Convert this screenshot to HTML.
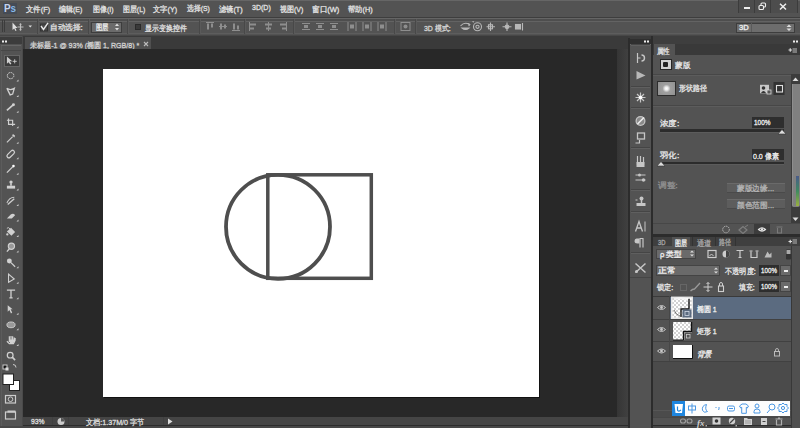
<!DOCTYPE html>
<html><head><meta charset="utf-8">
<style>
*{margin:0;padding:0;box-sizing:border-box}
html,body{width:800px;height:428px;overflow:hidden;background:#535353;font-family:"Liberation Sans",sans-serif}
.a{position:absolute}
.t{position:absolute;white-space:nowrap;line-height:20px;transform-origin:0 0;font-family:"Liberation Sans",sans-serif;-webkit-text-stroke:0.3px currentColor}
</style></head><body>
<div class="a" style="left:0;top:0;width:800px;height:17px;background:#535353"></div>
<div class="a" style="left:0;top:0;width:800px;height:1px;background:#666"></div>
<div class="a" style="left:0;top:16.5px;width:800px;height:1px;background:#3e3e3e"></div>
<div class="a" style="left:3px;top:2.5px;width:13.5px;height:11.5px;background:#454b55"></div>
<div class="t" style="left:4px;top:-2.2px;font-size:11px;font-weight:bold;color:#86b8ea;line-height:20px;transform:scaleX(0.9);-webkit-text-stroke:0"><span style="color:#c4d4ee">P</span>s</div>
<div class="t" style="left:26.00px;top:0.00px;font-size:8px;color:#e2e2e2;transform:scaleX(0.923);">文件(F)</div>
<div class="t" style="left:59.00px;top:0.00px;font-size:8px;color:#e2e2e2;transform:scaleX(0.870);">编辑(E)</div>
<div class="t" style="left:92.50px;top:0.00px;font-size:8px;color:#e2e2e2;transform:scaleX(0.875);">图像(I)</div>
<div class="t" style="left:122.50px;top:0.00px;font-size:8px;color:#e2e2e2;transform:scaleX(0.865);">图层(L)</div>
<div class="t" style="left:153.00px;top:0.00px;font-size:8px;color:#e2e2e2;transform:scaleX(0.907);">文字(Y)</div>
<div class="t" style="left:187.00px;top:-1.00px;font-size:8px;color:#e2e2e2;transform:scaleX(0.852);">选择(S)</div>
<div class="t" style="left:219.00px;top:0.00px;font-size:8px;color:#e2e2e2;transform:scaleX(0.904);">滤镜(T)</div>
<div class="t" style="left:251.50px;top:-2.00px;font-size:8px;color:#e2e2e2;transform:scaleX(0.881);">3D(D)</div>
<div class="t" style="left:279.50px;top:0.00px;font-size:8px;color:#e2e2e2;transform:scaleX(0.870);">视图(V)</div>
<div class="t" style="left:311.55px;top:0.00px;font-size:8px;color:#e2e2e2;transform:scaleX(0.946);">窗口(W)</div>
<div class="t" style="left:348.00px;top:0.00px;font-size:8px;color:#e2e2e2;transform:scaleX(0.907);">帮助(H)</div>
<div class="a" style="left:738px;top:0;width:59px;height:13px;background:#4d4d4d"></div>
<div class="a" style="left:738px;top:0;width:1px;height:13px;background:#3c3c3c"></div>
<div class="a" style="left:754px;top:0;width:1px;height:13px;background:#3c3c3c"></div>
<div class="a" style="left:770px;top:0;width:1px;height:13px;background:#3c3c3c"></div>
<div class="a" style="left:797px;top:0;width:1px;height:13px;background:#3c3c3c"></div>
<div class="a" style="left:744px;top:6.5px;width:6px;height:2px;background:#eeeeee"></div>
<svg class="a" style="left:757px;top:2px" width="11" height="9"><rect x="4" y="1" width="4.5" height="4" rx="1" fill="none" stroke="#eeeeee" stroke-width="1.1"/><rect x="2" y="3.5" width="4.5" height="4" rx="1" fill="#4d4d4d" stroke="#eeeeee" stroke-width="1.1"/></svg>
<svg class="a" style="left:778px;top:2px" width="11" height="9"><path d="M2 1.8 L8 7.5 M8 1.8 L2 7.5" stroke="#eeeeee" stroke-width="1.5"/></svg>
<div class="a" style="left:0;top:17.5px;width:800px;height:18.5px;background:#535353"></div>
<div class="a" style="left:0;top:18px;width:800px;height:1px;background:#656565"></div>
<div class="a" style="left:0;top:19px;width:800px;height:2px;background:#4e4e4e"></div>
<div class="a" style="left:0;top:21px;width:800px;height:1px;background:#636363"></div>
<div class="a" style="left:0;top:33px;width:800px;height:1px;background:#5d5d5d"></div>
<div class="a" style="left:0;top:34.5px;width:800px;height:1.5px;background:#474747"></div>
<div class="a" style="left:2px;top:20px;width:1px;height:12px;background:#3c3c3c"></div>
<div class="a" style="left:4px;top:20px;width:1px;height:12px;background:#3c3c3c"></div>
<svg class="a" style="left:0;top:17px" width="36" height="18">
<path d="M12.5 5.5 L12.5 13 L14.2 11.5 L15.5 14 L16.5 13.5 L15.3 11 L17.5 11 Z" fill="#dedede"/>
<path d="M17.5 10 h6 M20.5 7 v6" stroke="#bdbdbd" stroke-width="1.2"/><path d="M19.5 7.5 l1 -1.2 l1 1.2 M19.5 12.5 l1 1.2 l1 -1.2" stroke="#bdbdbd" stroke-width="0.8" fill="none"/>
<path d="M28.5 8.5 h3.5 l-1.75 2 z" fill="#e0e0e0"/></svg>
<div class="a" style="left:37px;top:19px;width:1px;height:15px;background:#484848"></div><div class="a" style="left:38px;top:19px;width:1px;height:15px;background:#5a5a5a"></div>
<div class="a" style="left:88px;top:19px;width:1px;height:15px;background:#484848"></div><div class="a" style="left:89px;top:19px;width:1px;height:15px;background:#5a5a5a"></div>
<div class="a" style="left:127px;top:19px;width:1px;height:15px;background:#484848"></div><div class="a" style="left:128px;top:19px;width:1px;height:15px;background:#5a5a5a"></div>
<div class="a" style="left:199px;top:19px;width:1px;height:15px;background:#484848"></div><div class="a" style="left:200px;top:19px;width:1px;height:15px;background:#5a5a5a"></div>
<div class="a" style="left:244px;top:19px;width:1px;height:15px;background:#484848"></div><div class="a" style="left:245px;top:19px;width:1px;height:15px;background:#5a5a5a"></div>
<div class="a" style="left:293px;top:19px;width:1px;height:15px;background:#484848"></div><div class="a" style="left:294px;top:19px;width:1px;height:15px;background:#5a5a5a"></div>
<div class="a" style="left:394px;top:19px;width:1px;height:15px;background:#484848"></div><div class="a" style="left:395px;top:19px;width:1px;height:15px;background:#5a5a5a"></div>
<div class="a" style="left:415px;top:19px;width:1px;height:15px;background:#484848"></div><div class="a" style="left:416px;top:19px;width:1px;height:15px;background:#5a5a5a"></div>
<svg class="a" style="left:39px;top:21px" width="11" height="11" viewBox="0 0 11 11"><rect x="1.5" y="3" width="7" height="7" fill="#474747" stroke="#333" stroke-width="1"/><path d="M2 5 L4.5 8.5 L9 1.8" fill="none" stroke="#e6e6e6" stroke-width="1.4"/></svg>
<div class="t" style="left:50.05px;top:17.50px;font-size:8px;color:#e0e0e0;transform:scaleX(0.955);">自动选择:</div>
<div class="a" style="left:91px;top:21.5px;width:31px;height:11px;background:#6b6b6b;border:1px solid #3d3d3d"></div>
<div class="t" style="left:95.50px;top:18.00px;font-size:8px;color:#f0f0f0;transform:scaleX(0.781);">图层</div>
<svg class="a" style="left:113px;top:22px" width="8" height="10"><path d="M2 4 l2 -2.5 l2 2.5z M2 6 l2 2.5 l2 -2.5z" fill="#ddd"/></svg>
<div class="a" style="left:135px;top:24px;width:6px;height:6px;background:#3a3a3a;border:1px solid #2a2a2a"></div>
<div class="t" style="left:144.50px;top:18.50px;font-size:8px;color:#e0e0e0;transform:scaleX(0.865);">显示变换控件</div>
<svg class="a" style="left:0;top:0" width="800" height="36"><path d="M206 22.5 h8" stroke="#8e8e8e"/><rect x="207" y="23.5" width="2" height="6" fill="#8e8e8e"/><rect x="211" y="23.5" width="2" height="4" fill="#8e8e8e"/><path d="M219 26.5 h8" stroke="#8e8e8e"/><rect x="220" y="23.5" width="2" height="6" fill="#8e8e8e"/><rect x="224" y="24.5" width="2" height="4" fill="#8e8e8e"/><path d="M232 30.5 h8" stroke="#8e8e8e"/><rect x="233" y="23.5" width="2" height="6" fill="#8e8e8e"/><rect x="237" y="25.5" width="2" height="4" fill="#8e8e8e"/><path d="M249.5 22 v9" stroke="#8e8e8e"/><rect x="250" y="23.5" width="6" height="2" fill="#8e8e8e"/><rect x="250" y="27.5" width="4" height="2" fill="#8e8e8e"/><path d="M268.5 22 v9" stroke="#8e8e8e"/><rect x="265" y="23.5" width="7" height="2" fill="#8e8e8e"/><rect x="266" y="27.5" width="5" height="2" fill="#8e8e8e"/><path d="M286.5 22 v9" stroke="#8e8e8e"/><rect x="280" y="23.5" width="6" height="2" fill="#8e8e8e"/><rect x="282" y="27.5" width="4" height="2" fill="#8e8e8e"/><path d="M302 23.5 h8 M302 29.5 h8" stroke="#8e8e8e"/><rect x="304" y="25" width="4" height="3" fill="#8e8e8e"/><path d="M316 23.5 h8 M316 29.5 h8" stroke="#8e8e8e"/><rect x="318" y="25" width="4" height="3" fill="#8e8e8e"/><path d="M330 23.5 h8 M330 29.5 h8" stroke="#8e8e8e"/><rect x="332" y="25" width="4" height="3" fill="#8e8e8e"/><path d="M348 22 v9 M356 22 v9" stroke="#8e8e8e"/><rect x="350" y="24.5" width="4" height="4" fill="#8e8e8e"/><path d="M363 22 v9 M371 22 v9" stroke="#8e8e8e"/><rect x="365" y="24.5" width="4" height="4" fill="#8e8e8e"/><path d="M378 22 v9 M386 22 v9" stroke="#8e8e8e"/><rect x="380" y="24.5" width="4" height="4" fill="#8e8e8e"/><rect x="401" y="22.5" width="9" height="8" fill="none" stroke="#8e8e8e"/><circle cx="405.5" cy="26.5" r="2" fill="#8e8e8e"/><g stroke="#b8b8b8" fill="none" stroke-width="1.1"><path d="M460.5 26 q4 -4.5 9 -1.5"/><path d="M462 28 q3.5 3 7 0 z" fill="#b8b8b8"/><path d="M468 23.5 l1.8 1 l-1.2 1.6" /><circle cx="477.5" cy="26.8" r="4"/><circle cx="477.5" cy="26.8" r="1.6"/><path d="M474 22 l-1.5 -0.5"/><path d="M490.5 22.5 v8.5 M486.5 26.8 h8.5"/><rect x="488.5" y="24.8" width="4" height="4"/><path d="M507 22.5 v8.5 M502.5 26.8 h9"/><circle cx="507" cy="26.8" r="1.8" fill="#b8b8b8"/><rect x="515.5" y="24.5" width="5" height="4.5" fill="#b8b8b8"/><path d="M522.5 23 v7.5"/></g></svg>
<div class="t" style="left:424.00px;top:18.50px;font-size:8px;color:#d6d6d6;transform:scaleX(0.867);">3D 模式:</div>
<div class="a" style="left:735.5px;top:22.5px;width:59px;height:10px;background:#6d6d6d;border:1px solid #3d3d3d"></div>
<div class="t" style="left:738.70px;top:17.70px;font-size:7px;color:#f0f0f0;transform:scaleX(1.078);">3D</div>
<div class="a" style="left:751px;top:23px;width:1px;height:9px;background:#5a5a5a"></div>
<svg class="a" style="left:785px;top:23px" width="8" height="10"><path d="M1.5 4 l2.5 -2.5 l2.5 2.5z M1.5 5.5 l2.5 2.5 l2.5 -2.5z" fill="#ddd"/></svg>
<div class="a" style="left:23px;top:36px;width:605px;height:13px;background:#3a3a3a"></div>
<div class="a" style="left:24.5px;top:37px;width:126.5px;height:12px;background:#505050"></div>
<div class="t" style="left:29.50px;top:35.50px;font-size:8px;color:#d2d2d2;transform:scaleX(0.883);">未标题-1 @ 93% (椭圆 1, RGB/8) *</div>
<svg class="a" style="left:142px;top:40px" width="8" height="8"><path d="M2 2 L6 6 M6 2 L2 6" stroke="#bbb" stroke-width="1.1"/></svg>
<div class="a" style="left:23px;top:49px;width:594px;height:367.5px;background:#282828"></div>
<div class="a" style="left:616.5px;top:49px;width:11.5px;height:367.5px;background:linear-gradient(90deg,#353535,#404040)"></div>
<div class="a" style="left:103px;top:69px;width:436px;height:327.5px;background:#fff;box-shadow:1px 1px 0 #121212"></div>
<svg class="a" style="left:0;top:0" width="800" height="428">
<circle cx="278" cy="226.8" r="52" fill="none" stroke="#4e4e4e" stroke-width="3.8"/>
<rect x="267.8" y="174.8" width="103.5" height="103.5" fill="none" stroke="#4e4e4e" stroke-width="3.5"/>
</svg>
<div class="a" style="left:23px;top:416.5px;width:605px;height:8.5px;background:#454545"></div>
<div class="a" style="left:0;top:425px;width:800px;height:1px;background:#2c2c2c"></div>
<div class="a" style="left:0;top:426px;width:800px;height:2px;background:#474747"></div>
<div class="a" style="left:52px;top:417px;width:1px;height:8px;background:#404040"></div>
<svg class="a" style="left:56px;top:417px" width="10" height="9"><circle cx="5" cy="4.5" r="3.5" fill="#ccc"/><path d="M5 4.5 L5 1 A3.5 3.5 0 0 1 8.5 4.5Z" fill="#555"/></svg>
<div class="a" style="left:68px;top:417px;width:1px;height:8px;background:#404040"></div>
<div class="t" style="left:30.50px;top:412.00px;font-size:7px;color:#dedede;transform:scaleX(0.964);">93%</div>
<div class="t" style="left:86.00px;top:413.00px;font-size:8px;color:#dedede;transform:scaleX(0.892);">文档:1.37M/0 字节</div>
<div class="a" style="left:163px;top:417px;width:1px;height:8px;background:#404040"></div>
<svg class="a" style="left:166px;top:417px" width="8" height="9"><path d="M2 1.5 L6.5 4.5 L2 7.5Z" fill="#ddd"/></svg>
<div class="a" style="left:0;top:36px;width:23px;height:390px;background:#535353"></div>
<div class="a" style="left:22px;top:36px;width:1px;height:390px;background:#4a4a4a"></div>
<div class="a" style="left:1px;top:46px;width:1px;height:380px;background:#5c5c5c"></div>
<div class="a" style="left:0;top:37px;width:22px;height:7px;background:#3c3c3c"></div>
<svg class="a" style="left:1px;top:39.5px" width="8" height="4"><rect x="1" y="0.5" width="2" height="2" fill="#eee"/><rect x="4" y="0.5" width="2" height="2" fill="#eee"/></svg>
<div class="a" style="left:1px;top:45px;width:20px;height:1px;background:#666"></div>
<div class="a" style="left:1px;top:50px;width:20px;height:1px;background:#474747"></div>
<div class="a" style="left:3.5px;top:54.5px;width:16px;height:12.5px;background:#3b3b3b;border:1px solid #666"></div>
<svg class="a" style="left:0;top:36px" width="23" height="392"><g transform="translate(11,24.50) scale(0.82)"><path d="M-5 -5 L-5 4 L-3 2 L-1 5 L0.5 4 L-1.5 1 L1.5 1 Z" fill="#d0d0d0"/><path d="M2 1 h5 M4.5 -1.5 v5" stroke="#d0d0d0" stroke-width="1.1"/></g><g transform="translate(11,40.05) scale(0.82)"><ellipse cx="-0.5" cy="-0.5" rx="4" ry="3.8" fill="none" stroke="#d0d0d0" stroke-width="1.2" stroke-dasharray="2 1"/></g><path d="M16.5 45.55 l2 0 l0 -2 z" fill="#cfcfcf"/><g transform="translate(11,55.60) scale(0.82)"><path d="M-5 -4 Q-1 -1 4 -4 L2 3 L-1 4 L-3 0 Z" fill="none" stroke="#d0d0d0" stroke-width="1.6"/></g><path d="M16.5 61.10 l2 0 l0 -2 z" fill="#cfcfcf"/><g transform="translate(11,71.15) scale(0.82)"><path d="M-5 4 L3 -3" stroke="#d0d0d0" stroke-width="2"/><circle cx="3" cy="-3" r="1.8" fill="#d0d0d0"/></g><path d="M16.5 76.65 l2 0 l0 -2 z" fill="#cfcfcf"/><g transform="translate(11,86.70) scale(0.82)"><path d="M-3 -5 V2 H5 M-5 -3 H2 V4" fill="none" stroke="#d0d0d0" stroke-width="1.4"/></g><path d="M16.5 92.20 l2 0 l0 -2 z" fill="#cfcfcf"/><g transform="translate(11,102.25) scale(0.82)"><path d="M-5 5 L2 -2" stroke="#d0d0d0" stroke-width="1.4"/><path d="M1 -4 L4 -1 L5 -3 L3 -5 Z" fill="#d0d0d0"/></g><path d="M16.5 107.75 l2 0 l0 -2 z" fill="#cfcfcf"/><g transform="translate(11,117.80) scale(0.82)"><rect x="-6" y="-2.3" width="11" height="4.6" rx="2.3" transform="rotate(-45)" fill="none" stroke="#d0d0d0" stroke-width="1.5"/></g><path d="M16.5 123.30 l2 0 l0 -2 z" fill="#cfcfcf"/><g transform="translate(11,133.35) scale(0.82)"><path d="M-5 4 L2 -3" stroke="#d0d0d0" stroke-width="1.6"/><circle cx="3" cy="-4" r="1.6" fill="#fff"/></g><path d="M16.5 138.85 l2 0 l0 -2 z" fill="#cfcfcf"/><g transform="translate(11,148.90) scale(0.82)"><circle cx="0" cy="-3.5" r="2" fill="#d0d0d0"/><rect x="-1" y="-2" width="2" height="3" fill="#d0d0d0"/><rect x="-5" y="1" width="10" height="3.5" fill="#d0d0d0"/></g><path d="M16.5 154.40 l2 0 l0 -2 z" fill="#cfcfcf"/><g transform="translate(11,164.45) scale(0.82)"><path d="M-5 3 Q-2 -4 4 -4" fill="none" stroke="#d0d0d0" stroke-width="1.3"/><path d="M-4 5 L4 -2" stroke="#d0d0d0" stroke-width="1.6"/></g><path d="M16.5 169.95 l2 0 l0 -2 z" fill="#cfcfcf"/><g transform="translate(11,180.00) scale(0.82)"><path d="M-5 3 L0 -2 Q3 -4 5 -1 L1 3 Z" fill="#d0d0d0"/></g><path d="M16.5 185.50 l2 0 l0 -2 z" fill="#cfcfcf"/><g transform="translate(11,195.55) scale(0.82)"><path d="M-5 0 L0 -4.5 L5 0.5 L0.5 5 Z" fill="#d0d0d0"/><path d="M-1 -3 Q-3 -6 -5 -4" stroke="#d0d0d0" stroke-width="1.1" fill="none"/><circle cx="-4.5" cy="3.5" r="1.4" fill="#d0d0d0"/></g><path d="M16.5 201.05 l2 0 l0 -2 z" fill="#cfcfcf"/><g transform="translate(11,211.10) scale(0.82)"><circle cx="0.5" cy="-1" r="3.8" fill="#9a9a9a" stroke="#d0d0d0" stroke-width="1.4"/><path d="M-2 2 L-5 5.5" stroke="#d0d0d0" stroke-width="1.6"/></g><path d="M16.5 216.60 l2 0 l0 -2 z" fill="#cfcfcf"/><g transform="translate(11,226.65) scale(0.82)"><circle cx="-2" cy="-2" r="3" fill="#d0d0d0"/><path d="M0 0 L5 5" stroke="#d0d0d0" stroke-width="1.5"/></g><path d="M16.5 232.15 l2 0 l0 -2 z" fill="#cfcfcf"/><g transform="translate(11,242.20) scale(0.82)"><path d="M-3 -5 L-3 5 L4 1 Z" fill="none" stroke="#d0d0d0" stroke-width="1.3"/></g><path d="M16.5 247.70 l2 0 l0 -2 z" fill="#cfcfcf"/><g transform="translate(11,257.75) scale(0.82)"><path d="M-5 -4.5 H5 M0 -4.5 V5 M-2 5 H2" stroke="#d0d0d0" stroke-width="1.6"/></g><path d="M16.5 263.25 l2 0 l0 -2 z" fill="#cfcfcf"/><g transform="translate(11,273.30) scale(0.82)"><path d="M-4 -5 L-4 3 L-2 1 L0 5 L1.5 4 L-0.5 0 L2 0 Z" fill="#d0d0d0"/></g><path d="M16.5 278.80 l2 0 l0 -2 z" fill="#cfcfcf"/><g transform="translate(11,288.85) scale(0.82)"><ellipse cx="0" cy="0" rx="5" ry="3.5" fill="#999" stroke="#d0d0d0" stroke-width="1.1"/></g><path d="M16.5 294.35 l2 0 l0 -2 z" fill="#cfcfcf"/><g transform="translate(11,304.40) scale(0.82)"><path d="M-5 1 L-2 4 L3 4 L5 0 L5 -3 M-2 2 V-5 M0 1 V-5.5 M2 1 V-5 M4 1 V-3.5" fill="none" stroke="#d0d0d0" stroke-width="1.5"/><path d="M-2 -1 h6 v3 l-2 2 h-3z" fill="#d0d0d0"/></g><path d="M16.5 309.90 l2 0 l0 -2 z" fill="#cfcfcf"/><g transform="translate(11,319.95) scale(0.82)"><circle cx="-1" cy="-1" r="3.5" fill="none" stroke="#d0d0d0" stroke-width="1.5"/><path d="M1.5 1.5 L5 5" stroke="#d0d0d0" stroke-width="2"/></g><rect x="3" y="329" width="4" height="4" fill="#111" stroke="#ccc" stroke-width="1"/><rect x="5.5" y="331.5" width="3" height="3" fill="#ddd"/><path d="M13 328.5 q3 0 3 3" stroke="#ccc" stroke-width="1" fill="none"/><rect x="9.5" y="344.5" width="10" height="10" fill="#fff" stroke="#222" stroke-width="1"/><rect x="3" y="338" width="10.5" height="10.5" fill="#fff" stroke="#222" stroke-width="1"/><rect x="5.5" y="359.5" width="10" height="7.5" fill="none" stroke="#ccc" stroke-width="1.2"/><circle cx="10.5" cy="363.2" r="2.3" fill="none" stroke="#ccc" stroke-width="1"/><rect x="5.5" y="376" width="10" height="7" fill="none" stroke="#ccc" stroke-width="1.2"/><rect x="7.5" y="374.5" width="8" height="2" fill="#ccc"/></svg>
<div class="a" style="left:627.5px;top:37.5px;width:2px;height:390.5px;background:#2c2c2c"></div>
<div class="a" style="left:628px;top:36px;width:2px;height:1.5px;background:#3b3b3b"></div>
<div class="a" style="left:630px;top:36px;width:21px;height:392px;background:#535353"></div>
<div class="a" style="left:630px;top:36px;width:21px;height:3px;background:#3b3b3b"></div>
<div class="a" style="left:630px;top:39px;width:21px;height:4.5px;background:#2f2f2f"></div>
<div class="a" style="left:630px;top:43.5px;width:21px;height:1px;background:#666"></div>
<svg class="a" style="left:643px;top:39.5px" width="8" height="4"><rect x="1" y="0.5" width="2" height="2" fill="#eee"/><rect x="4" y="0.5" width="2" height="2" fill="#eee"/></svg>
<div class="a" style="left:651px;top:36px;width:2px;height:392px;background:#2c2c2c"></div>
<svg class="a" style="left:630px;top:44px" width="21" height="240">
<g stroke="#454545" stroke-width="1"><path d="M1 0.5 H20"/><path d="M1 42.5 H20"/><path d="M1 63.5 H20"/><path d="M1 103.5 H20"/><path d="M1 145.5 H20"/><path d="M1 167.5 H20"/><path d="M1 208.5 H20"/><path d="M0 233.5 H21"/></g>
<g stroke="#5f5f5f" stroke-width="1"><path d="M1 1.5 H20"/><path d="M1 43.5 H20"/><path d="M1 64.5 H20"/><path d="M1 104.5 H20"/><path d="M1 146.5 H20"/><path d="M1 168.5 H20"/><path d="M1 209.5 H20"/></g>
<g transform="translate(10.5,14)"><path d="M-3 -5 V5 M-3 0 H0" stroke="#c6c6c6" stroke-width="1.2"/><path d="M1 -3 A3 3 0 1 1 1 3" fill="none" stroke="#c6c6c6" stroke-width="1.4"/></g>
<g transform="translate(10.5,31)"><path d="M-4 -4 L5 0.5 L-4 4.5 Z" fill="#b8b8b8"/></g>
<g transform="translate(10.5,53.5)"><path d="M-5 0 H5 M0 -5 V5 M-3.5 -3.5 L3.5 3.5 M3.5 -3.5 L-3.5 3.5" stroke="#c6c6c6" stroke-width="1.2"/><circle r="1.8" fill="#fff"/></g>
<g transform="translate(10.5,77)"><circle r="5" fill="#c6c6c6"/><circle r="3.8" fill="#8a8a8a"/><path d="M-3 3 L3.5 -3.5" stroke="#eee" stroke-width="1.6"/></g>
<g transform="translate(10.5,94)"><rect x="-3" y="-5" width="7" height="6" fill="none" stroke="#c6c6c6" stroke-width="1.3"/><path d="M-5 5 h4 v-3" fill="none" stroke="#c6c6c6" stroke-width="1.2"/></g>
<g transform="translate(10.5,117)"><path d="M-3 4 V-5 M0 3 V-5 M3 4 V-4" stroke="#c6c6c6" stroke-width="1.2"/><rect x="-4" y="1" width="8" height="5" fill="#c6c6c6"/></g>
<g transform="translate(10.5,133.5)"><path d="M-5 -2.5 H5 M-5 2.5 H5" stroke="#c6c6c6" stroke-width="1.2"/><circle cx="-1" cy="-2.5" r="1.5" fill="#c6c6c6"/><circle cx="3" cy="2.5" r="1.7" fill="#c6c6c6"/></g>
<g transform="translate(10.5,158)"><circle cx="1" cy="-3.5" r="2" fill="#c6c6c6"/><path d="M1 -2 V1" stroke="#c6c6c6" stroke-width="1.5"/><rect x="-4" y="1" width="9" height="3" fill="#c6c6c6"/><path d="M-5 -2 h2" stroke="#c6c6c6"/></g>
<g transform="translate(10.5,182.5)"><path d="M-5 5 L-1.5 -5 L2 5 M-3.5 1.5 H0.5" fill="none" stroke="#c6c6c6" stroke-width="1.3"/><path d="M4.5 -5 V5" stroke="#c6c6c6" stroke-width="1"/></g>
<g transform="translate(10.5,198.5)"><path d="M-1 -4 H-4 Q-6 -4 -6 -1.5 Q-6 1 -3 1 H-1 Z" fill="#c6c6c6"/><path d="M-0.5 -4 V5 M2.5 -4 V5 M-1 -4 H3" stroke="#c6c6c6" stroke-width="1.2"/></g>
<g transform="translate(10.5,223.5)"><path d="M-5 -4 L5 5 M5 -4 L-5 5" stroke="#c6c6c6" stroke-width="1.5"/><circle cx="-4" cy="4" r="1.5" fill="#c6c6c6"/></g>
</svg>
<div class="a" style="left:653px;top:36px;width:147px;height:8px;background:#3e3e3e"></div>
<svg class="a" style="left:792px;top:39.5px" width="8" height="4"><rect x="1" y="0.5" width="2" height="2" fill="#eee"/><rect x="4" y="0.5" width="2" height="2" fill="#eee"/></svg>
<div class="a" style="left:653px;top:44px;width:147px;height:11px;background:#393939"></div>
<div class="a" style="left:654px;top:44px;width:20.5px;height:11px;background:#535353"></div>
<div class="t" style="left:657.20px;top:42.00px;font-size:8px;color:#e0e0e0;transform:scaleX(0.812);">属性</div>
<svg class="a" style="left:786px;top:45px" width="14" height="10"><path d="M2.5 5 h3.5 M4.25 3.2 v3.6" stroke="#e0e0e0" stroke-width="1.1"/><rect x="6.5" y="3" width="4.5" height="5" fill="#7a7a7a"/></svg>
<div class="a" style="left:659.5px;top:58.5px;width:12px;height:11px;background:#262626"></div>
<div class="a" style="left:660.5px;top:59.5px;width:10px;height:9px;background:#d0d0d0"></div>
<div class="a" style="left:663px;top:61.5px;width:5px;height:5px;background:#222;border-radius:1px"></div>
<div class="t" style="left:675.30px;top:55.60px;font-size:8px;color:#e6e6e6;transform:scaleX(0.944);">蒙版</div>
<div class="a" style="left:653px;top:74px;width:138px;height:1px;background:#474747"></div>
<div class="a" style="left:653px;top:75px;width:138px;height:1px;background:#5c5c5c"></div>
<div class="a" style="left:657px;top:80.5px;width:19px;height:15px;background:#2d2d2d"></div>
<div class="a" style="left:658px;top:81.5px;width:17px;height:13px;background:radial-gradient(circle at 50% 50%, #fff 0, #f0f0f0 1.5px, #a0a0a0 4px, #909090 100%)"></div>
<div class="t" style="left:679.00px;top:79.00px;font-size:8px;color:#e6e6e6;transform:scaleX(0.875);">形状路径</div>
<svg class="a" style="left:758px;top:81px" width="30" height="15">
<rect x="2" y="3.8" width="9" height="8.5" fill="#c8c8c8"/><circle cx="5.5" cy="7" r="1.8" fill="#333"/><path d="M3 12 q2.5 -4 5 0z" fill="#333"/>
<rect x="9" y="9" width="4" height="4" fill="#555" stroke="#ddd" stroke-width="0.8"/>
<rect x="15.5" y="1" width="11" height="13" fill="#333"/><rect x="18.5" y="4.5" width="6" height="6.5" fill="none" stroke="#e0e0e0" stroke-width="1.1"/>
</svg>
<div class="a" style="left:653px;top:105px;width:138px;height:1px;background:#474747"></div>
<div class="a" style="left:653px;top:106px;width:138px;height:1px;background:#5c5c5c"></div>
<div class="t" style="left:660.00px;top:113.50px;font-size:8px;color:#e6e6e6;transform:scaleX(1.056);">浓度:</div>
<div class="a" style="left:751.5px;top:117px;width:32px;height:10.5px;background:#2e2e2e"></div>
<div class="t" style="left:753.50px;top:113.00px;font-size:7px;color:#f0f0f0;transform:scaleX(0.917);">100%</div>
<div class="a" style="left:660px;top:129px;width:124px;height:2.5px;background:#2c2c2c"></div>
<div class="a" style="left:660px;top:131.5px;width:124px;height:1px;background:#5c5c5c"></div>
<svg class="a" style="left:777px;top:128px" width="10" height="7"><path d="M1 6 L5 1.5 L9 6 Z" fill="#ddd" stroke="#333" stroke-width="0.6"/></svg>
<div class="t" style="left:660.00px;top:145.50px;font-size:8px;color:#e6e6e6;transform:scaleX(1.056);">羽化:</div>
<div class="a" style="left:751.5px;top:149px;width:32px;height:11px;background:#2e2e2e"></div>
<div class="t" style="left:752.50px;top:146.50px;font-size:8px;color:#f0f0f0;transform:scaleX(0.879);">0.0 像素</div>
<div class="a" style="left:660px;top:161.5px;width:124px;height:2.5px;background:#2c2c2c"></div>
<div class="a" style="left:660px;top:164px;width:124px;height:1px;background:#5c5c5c"></div>
<svg class="a" style="left:656px;top:160px" width="10" height="7"><path d="M1 6 L5 1.5 L9 6 Z" fill="#ddd" stroke="#333" stroke-width="0.6"/></svg>
<div class="t" style="left:657.50px;top:176.00px;font-size:8px;color:#8f8f8f;transform:scaleX(1.083);">调整:</div>
<div class="a" style="left:727px;top:182.5px;width:58px;height:10.5px;background:#5d5d5d;border-top:1px solid #6a6a6a;border-bottom:1px solid #4a4a4a"></div>
<div class="t" style="left:736.50px;top:179.00px;font-size:8px;color:#b4b4b4;transform:scaleX(0.961);">蒙版边缘...</div>
<div class="a" style="left:727px;top:199px;width:58px;height:10px;background:#5d5d5d;border-top:1px solid #6a6a6a;border-bottom:1px solid #4a4a4a"></div>
<div class="t" style="left:736.50px;top:195.50px;font-size:8px;color:#b4b4b4;transform:scaleX(0.961);">颜色范围...</div>
<div class="a" style="left:790.5px;top:74px;width:9.5px;height:150px;background:#3c3c3c"></div>
<div class="a" style="left:792px;top:84px;width:8px;height:123px;background:#808080;border-left:1px solid #8e8e8e;border-radius:0 0 2px 2px"></div>
<div class="a" style="left:796px;top:176px;width:3px;height:30px;background:linear-gradient(#4a5a8a,#3f8a60,#9ab040)"></div>
<svg class="a" style="left:791px;top:75px" width="9" height="8"><path d="M1.5 6 L4.5 2.5 L7.5 6 Z" fill="#ddd"/></svg>
<svg class="a" style="left:791px;top:215px" width="9" height="8"><path d="M1.5 2.5 L4.5 6 L7.5 2.5 Z" fill="#ddd"/></svg>
<div class="a" style="left:653px;top:223px;width:147px;height:1px;background:#474747"></div>
<svg class="a" style="left:718px;top:224px" width="72" height="11">
<circle cx="8" cy="5.5" r="3.3" fill="none" stroke="#c8c8c8" stroke-width="1" stroke-dasharray="1.2 1"/>
<path d="M21 6 l4 -3.5 l4 3.5 l-4 3.5z" fill="none" stroke="#7e7e7e" stroke-width="1.2"/><path d="M27 3 l3 -2" stroke="#7e7e7e"/>
<rect x="36" y="-0.5" width="16" height="11" fill="#3c3c3c"/>
<path d="M40.5 5.5 Q44 2.2 47.5 5.5 Q44 8.8 40.5 5.5 Z" fill="none" stroke="#e6e6e6" stroke-width="1.1"/><circle cx="44" cy="5.5" r="1.2" fill="#e6e6e6"/>
<path d="M58.5 3 h6 M59.5 4 v5 h4 v-5" fill="none" stroke="#7a7a7a" stroke-width="1.1"/>
</svg>
<div class="a" style="left:653px;top:234px;width:147px;height:3px;background:#2c2c2c"></div>
<div class="a" style="left:653px;top:237px;width:147px;height:9px;background:#3f3f3f"></div>
<div class="t" style="left:657.50px;top:232.50px;font-size:7px;color:#a8a8a8;transform:scaleX(0.833);">3D</div>
<div class="a" style="left:671.5px;top:237px;width:18.5px;height:9px;background:#535353"></div>
<div class="t" style="left:675.00px;top:233.50px;font-size:8px;color:#eeeeee;transform:scaleX(0.750);">图层</div>
<div class="a" style="left:692px;top:237px;width:1px;height:9px;background:#333"></div>
<div class="t" style="left:696.50px;top:233.50px;font-size:8px;color:#a8a8a8;transform:scaleX(0.906);">通道</div>
<div class="a" style="left:715px;top:237px;width:1px;height:9px;background:#333"></div>
<div class="t" style="left:719.00px;top:232.50px;font-size:8px;color:#a8a8a8;transform:scaleX(0.750);">路径</div>
<div class="a" style="left:735px;top:237px;width:1px;height:9px;background:#333"></div>
<svg class="a" style="left:786px;top:237px" width="14" height="9"><path d="M2.5 4.5 h3.5 M4.25 2.7 v3.6" stroke="#e0e0e0" stroke-width="1.1"/><rect x="6.5" y="2" width="4.5" height="5" fill="#7a7a7a"/></svg>
<div class="a" style="left:655.5px;top:248.5px;width:40.5px;height:10px;background:#6a6a6a;border:1px solid #444"></div>
<div class="t" style="left:660.00px;top:244.50px;font-size:8px;color:#eeeeee;transform:scaleX(0.957);">ρ 类型</div>
<svg class="a" style="left:688px;top:249px" width="8" height="9"><path d="M2 3.5 l2 -2 l2 2z M2 5.5 l2 2 l2 -2z" fill="#ddd"/></svg>
<svg class="a" style="left:703px;top:248px" width="95" height="12">
<rect x="5" y="2.5" width="8" height="7" fill="none" stroke="#ccc" stroke-width="1.2"/><path d="M6.5 8 l2 -2 l2 2" stroke="#ccc" fill="none"/>
<circle cx="23" cy="6" r="3.5" fill="#ccc"/><path d="M23 2.5 A3.5 3.5 0 0 1 23 9.5 Z" fill="#444"/>
<path d="M33.5 2.5 h7 M37 2.5 v7 M35.5 9.5 h3" stroke="#ccc" stroke-width="1.2"/>
<path d="M48 3.5 v6 h6 v-6" fill="none" stroke="#ccc" stroke-width="1.2"/><path d="M46.5 3 h3 M52.5 3 h3" stroke="#ccc"/>
<path d="M61.5 9.5 l3 -6 l2 3 l2 -2 v5 z" fill="#bbb"/>
<rect x="83" y="1.5" width="5" height="10" rx="1" fill="#333"/><rect x="83.5" y="2" width="4" height="4" rx="0.5" fill="#aaa"/>
</svg>
<div class="a" style="left:655.5px;top:264.5px;width:64.5px;height:11.5px;background:#6a6a6a;border:1px solid #444"></div>
<div class="t" style="left:657.50px;top:261.00px;font-size:8px;color:#eeeeee;transform:scaleX(1.100);">正常</div>
<svg class="a" style="left:712px;top:265.5px" width="8" height="9"><path d="M2 3.5 l2 -2 l2 2z M2 5.5 l2 2 l2 -2z" fill="#ddd"/></svg>
<div class="t" style="left:724.50px;top:262.00px;font-size:8px;color:#e6e6e6;transform:scaleX(0.897);">不透明度:</div>
<div class="a" style="left:758.5px;top:264.5px;width:20.5px;height:11.5px;background:#2e2e2e"></div>
<div class="t" style="left:761.00px;top:261.00px;font-size:7px;color:#eeeeee;transform:scaleX(0.889);">100%</div>
<div class="a" style="left:780px;top:265px;width:11px;height:11px;background:#6a6a6a;border:1px solid #444"></div>
<div class="a" style="left:783.5px;top:270px;width:4px;height:1.5px;background:#eee"></div>
<div class="t" style="left:657.00px;top:277.50px;font-size:8px;color:#e6e6e6;transform:scaleX(0.889);">锁定:</div>
<svg class="a" style="left:676px;top:281px" width="50" height="12">
<rect x="4.5" y="3.5" width="6" height="6" fill="none" stroke="#7a7a7a" stroke-width="1" stroke-dasharray="1 1"/>
<path d="M14.5 10 Q16.5 8 18.5 8 L24 2" stroke="#999" stroke-width="1.3" fill="none"/>
<path d="M32 1.5 v9 M27.5 6 h9 M30.5 3 l1.5 -1.5 l1.5 1.5 M30.5 9 l1.5 1.5 l1.5 -1.5" stroke="#cfcfcf" stroke-width="1" fill="none"/>
<rect x="42.5" y="5" width="5" height="5.5" fill="none" stroke="#cfcfcf" stroke-width="1.1"/><path d="M43.5 5 v-2 a1.5 1.5 0 0 1 3 0 v2" fill="none" stroke="#cfcfcf"/>
</svg>
<div class="t" style="left:739.00px;top:278.00px;font-size:8px;color:#e6e6e6;transform:scaleX(0.861);">填充:</div>
<div class="a" style="left:758.5px;top:280.5px;width:20.5px;height:11.5px;background:#2e2e2e"></div>
<div class="t" style="left:761.00px;top:277.00px;font-size:7px;color:#eeeeee;transform:scaleX(0.889);">100%</div>
<div class="a" style="left:780px;top:281px;width:11px;height:11px;background:#6a6a6a;border:1px solid #444"></div>
<div class="a" style="left:783.5px;top:286px;width:4px;height:1.5px;background:#eee"></div>
<div class="a" style="left:653px;top:295.5px;width:138px;height:1px;background:#3a3a3a"></div>
<div class="a" style="left:670px;top:296.5px;width:121px;height:22.5px;background:#5b6b80"></div>
<div class="a" style="left:653px;top:319px;width:138px;height:1px;background:#414141"></div>
<div class="a" style="left:653px;top:341px;width:138px;height:1px;background:#414141"></div>
<div class="a" style="left:653px;top:361px;width:138px;height:1px;background:#414141"></div>
<div class="a" style="left:668.5px;top:296px;width:1px;height:65px;background:#474747"></div>
<svg class="a" style="left:653px;top:296px" width="15" height="67">
<g fill="none" stroke="#c8c8c8" stroke-width="1"><path d="M4.5 11.5 Q8.5 7.5 12.5 11.5 Q8.5 15.5 4.5 11.5Z"/><path d="M4.5 33.5 Q8.5 29.5 12.5 33.5 Q8.5 37.5 4.5 33.5Z"/><path d="M4.5 55 Q8.5 51 12.5 55 Q8.5 59 4.5 55Z"/></g>
<circle cx="8.5" cy="11.5" r="1.4" fill="#c8c8c8"/><circle cx="8.5" cy="33.5" r="1.4" fill="#c8c8c8"/><circle cx="8.5" cy="55" r="1.4" fill="#c8c8c8"/>
</svg>
<svg class="a" style="left:670px;top:296px" width="26" height="67">
<defs><pattern id="ck" width="4" height="4" patternUnits="userSpaceOnUse"><rect width="4" height="4" fill="#fff"/><rect width="2" height="2" fill="#d2d2d2"/><rect x="2" y="2" width="2" height="2" fill="#d2d2d2"/></pattern></defs>
<rect x="1" y="0.5" width="22" height="22.5" fill="#e6e6e6"/>
<rect x="2.5" y="2" width="19" height="19.5" fill="url(#ck)"/>
<path d="M4 3 Q12 1 19 4" fill="none" stroke="#f4f4f4" stroke-width="2"/>
<path d="M19 3 V13 H11 V21" fill="none" stroke="#1a1a1a" stroke-width="1.4"/>
<path d="M4 14 Q6 19 10 20" fill="none" stroke="#555" stroke-width="0.8"/>
<rect x="12.5" y="13.5" width="9" height="8" fill="#5b6b80"/><rect x="15" y="15.5" width="4" height="4" fill="none" stroke="#cfd8e4" stroke-width="0.8"/>
<rect x="3" y="26" width="19" height="18" fill="url(#ck)"/>
<path d="M21.5 26 V35.5 H13.5 V44" fill="none" stroke="#111" stroke-width="1.4"/>
<path d="M3 44 H13.5" stroke="#111" stroke-width="1"/>
<rect x="14.5" y="36.5" width="7.5" height="7.5" fill="#535353"/><rect x="16.5" y="38.5" width="3.5" height="3.5" fill="none" stroke="#c8c8c8" stroke-width="0.8"/>
<rect x="3" y="49" width="19" height="13" fill="#fff"/><path d="M3 62.5 H22.5 V49" fill="none" stroke="#111" stroke-width="1"/>
</svg>
<div class="t" style="left:697.00px;top:300.00px;font-size:8px;color:#eeeeee;transform:scaleX(0.870);">椭圆 1</div>
<div class="t" style="left:697.00px;top:322.00px;font-size:8px;color:#eeeeee;transform:scaleX(0.870);">矩形 1</div>
<div class="t" style="left:697.07px;top:344.50px;font-size:8px;color:#eeeeee;transform:scaleX(0.933);font-style:italic">背景</div>
<svg class="a" style="left:772px;top:346px" width="10" height="12"><rect x="2.5" y="5.5" width="5" height="4.5" fill="none" stroke="#bbb" stroke-width="1"/><path d="M3.5 5.5 v-1.5 a1.5 1.5 0 0 1 3 0 v1.5" fill="none" stroke="#bbb" stroke-width="0.9"/></svg>
<div class="a" style="left:790.5px;top:246px;width:1px;height:182px;background:#383838"></div>
<div class="a" style="left:791.5px;top:246px;width:8.5px;height:182px;background:#505050"></div>
<div class="a" style="left:653px;top:361.5px;width:137.5px;height:55px;background:#4b4b4b"></div>
<div class="a" style="left:653px;top:409.5px;width:138px;height:1px;background:#565656"></div>
<div class="a" style="left:653px;top:416.5px;width:138px;height:1px;background:#474747"></div>
<svg class="a" style="left:653px;top:416px" width="138" height="12">
<g fill="none" stroke="#a0a0a0" stroke-width="1.1"><rect x="27.5" y="3" width="5" height="4" rx="2"/><rect x="34" y="3" width="5" height="4" rx="2"/></g>
<text x="44" y="10" font-family="Liberation Serif" font-style="italic" font-weight="bold" font-size="9" fill="#cfcfcf">fx</text><rect x="52.5" y="9" width="1.5" height="1.5" fill="#aaa"/>
<rect x="59.5" y="1.5" width="8" height="7" fill="#d0d0d0"/><circle cx="63.5" cy="5" r="1.8" fill="#333"/>
<circle cx="79" cy="5" r="3.2" fill="#d0d0d0"/><path d="M77 7 L81.5 2.5" stroke="#444" stroke-width="1.3"/><rect x="82.5" y="9" width="1.5" height="1.5" fill="#aaa"/>
<path d="M91 2 h3 l1 1 h4 v6 h-8z" fill="#cfcfcf"/><path d="M92 5 h6 M92 7 h6" stroke="#777" stroke-width="0.6"/>
<rect x="108" y="2" width="6" height="7" fill="#cfcfcf"/><path d="M109.5 5.5 h3" stroke="#444"/>
<path d="M122.5 3 h7 M123.5 4 v5 h5 v-5 M125 2 h2" stroke="#b0b0b0" stroke-width="1.2" fill="none"/>
</svg>
<div class="a" style="left:672px;top:401.2px;width:118px;height:15px;background:#fdfdfd"></div>
<div class="a" style="left:672px;top:401.2px;width:12.7px;height:15px;background:#1f86df"></div>
<svg class="a" style="left:672px;top:401.2px" width="118" height="15">
<path d="M2.5 3 h8.5 l-1 9 h-6.5z" fill="#fff"/><path d="M5.5 5.5 v3 q0 2 2 1.5 l1.5 -1" stroke="#1f86df" stroke-width="1.2" fill="none"/>
<g stroke="#4a97e3" stroke-width="1" fill="none">
<rect x="16.5" y="5" width="7" height="4"/><path d="M20 2.5 v10"/>
<path d="M34.5 3.5 q-5 1 -4 6 q2 3 5 1 q-3 -2 -1 -7z"/>
<path d="M44 6 v1 M47 6 v2 l-0.5 1"/>
<rect x="55.5" y="5" width="7" height="5" rx="1.5"/><path d="M57 7.5 h4"/>
<path d="M67.5 5 l2.5 -2 h4 l2.5 2 l-1.2 2 l-1 -0.7 v6 h-4.6 v-6 l-1 0.7z"/>
<circle cx="85" cy="5" r="2"/><path d="M82 12 v-1.5 a3 2.5 0 0 1 6 0 v1.5z"/>
<circle cx="100" cy="6" r="3"/><path d="M98 8.5 l-3 3.5"/>
<circle cx="111" cy="7" r="1.6"/><path d="M111 2 l1.5 1.5 h2.5 v2 l1.5 1.5 l-1.5 1.5 v2 h-2.5 l-1.5 1.5 l-1.5 -1.5 h-2.5 v-2 l-1.5 -1.5 l1.5 -1.5 v-2 h2.5z"/>
</g>
</svg>
</body></html>
